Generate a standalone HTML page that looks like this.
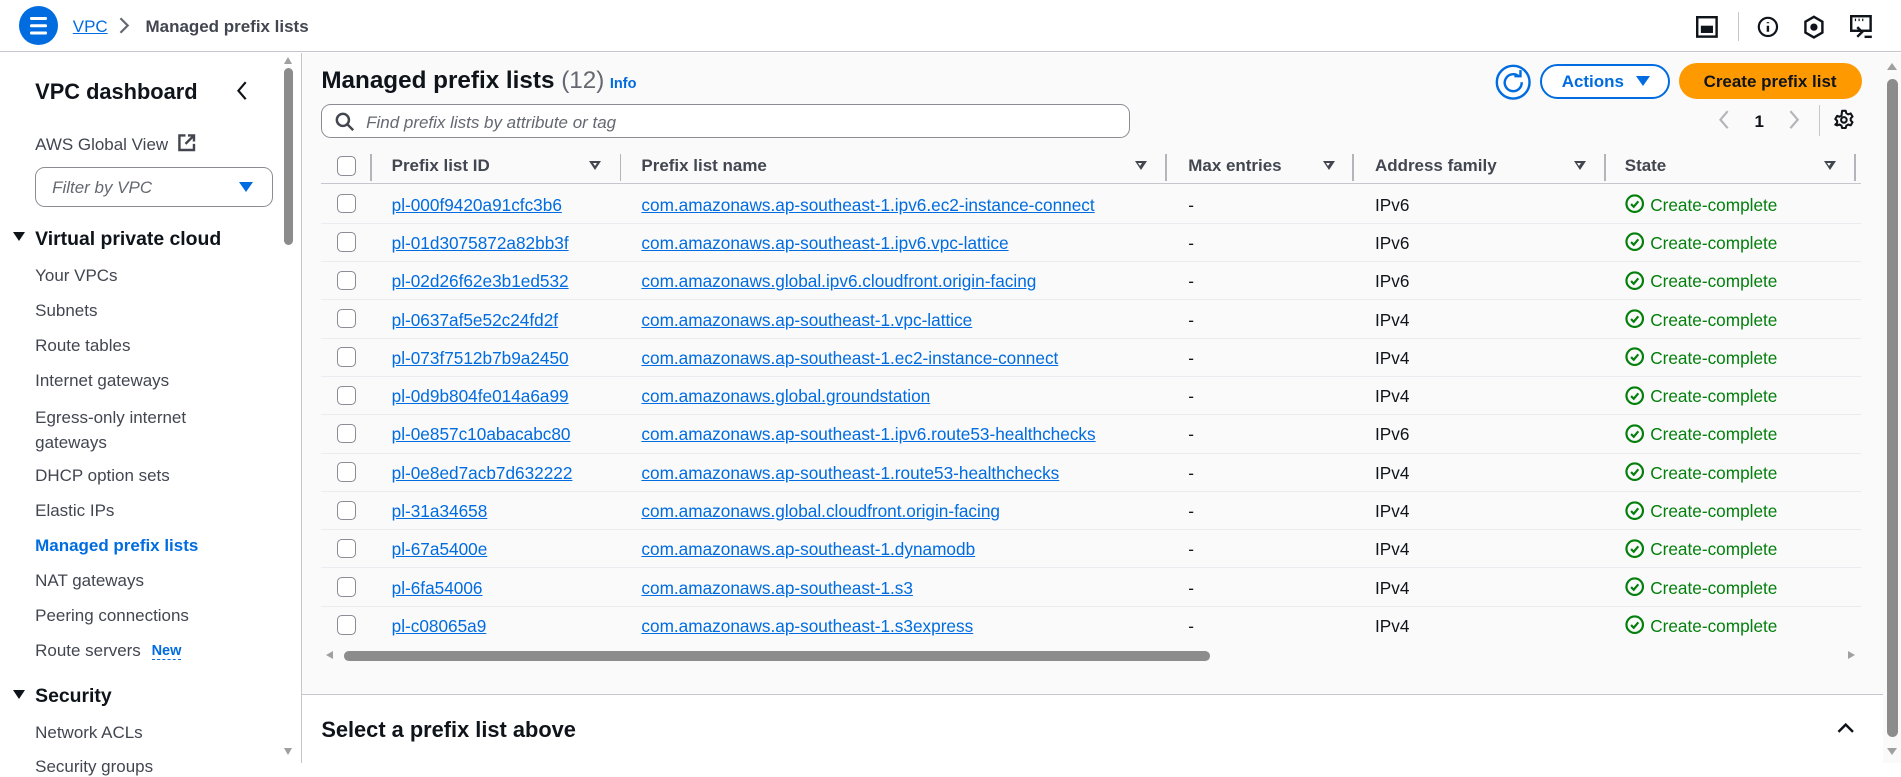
<!DOCTYPE html>
<html><head><meta charset="utf-8">
<style>
html{zoom:1.2125}
*{box-sizing:border-box;margin:0;padding:0}
body{width:1568px;height:629px;overflow:hidden;font-family:"Liberation Sans",sans-serif;color:#0f141a;background:#fff;position:relative;font-size:14px}
.a{position:absolute;white-space:nowrap}
.link{color:#006ce0;text-decoration:underline}
.nav{position:absolute;left:29px;font-size:14px;color:#424650}
.cb{position:absolute;left:278px;width:16px;height:16px;border:1.5px solid #8c8c94;border-radius:4px;background:#fff}
.row{position:absolute;left:265px;width:1270px;height:32px;border-top:1px solid #ebebf0}
.th{position:absolute;top:129px;font-weight:bold;color:#424650;font-size:14px}
.sep{position:absolute;top:127px;width:1.5px;height:22px;background:#b4b4bb}
.tri{position:absolute;top:133px;width:0;height:0;border-left:5px solid transparent;border-right:5px solid transparent;border-top:8px solid #424650}
.tri:after{content:"";position:absolute;left:-2px;top:-6px;border-left:2px solid transparent;border-right:2px solid transparent;border-top:3px solid #fff}
.ok{color:#037f0c}
.t{font-size:14.2px}
</style></head><body>
<!-- header -->
<div class="a" style="left:0;top:0;width:1568px;height:43px;border-bottom:1px solid #c6c6cd;background:#fff"></div>
<div class="a" style="left:16px;top:5px;width:32px;height:32px;border-radius:50%;background:#006ce0"></div>
<div class="a" style="left:25px;top:14px;width:14px;height:2.5px;background:#fff;box-shadow:0 6px 0 #fff,0 12px 0 #fff;border-radius:1px"></div>
<div class="a link" style="left:60px;top:14px;font-size:14px">VPC</div>
<svg class="a" style="left:97px;top:14px" width="10" height="14"><path d="M2 1l6 6-6 6" stroke="#656871" stroke-width="1.8" fill="none"/></svg>
<div class="a" style="left:120px;top:14px;font-size:14px;font-weight:bold;color:#424650">Managed prefix lists</div>
<svg class="a" style="left:1399px;top:13px" width="18" height="18"><rect x="1" y="1" width="16" height="16" fill="none" stroke="#0f141a" stroke-width="2"/><rect x="4" y="8" width="10" height="6" fill="#0f141a"/></svg>
<div class="a" style="left:1433px;top:10px;width:1px;height:24px;background:#c6c6cd"></div>
<svg class="a" style="left:1449px;top:13px" width="18" height="18"><circle cx="9" cy="9" r="7.5" fill="none" stroke="#0f141a" stroke-width="1.8"/><path d="M9 8v5M9 5v1" stroke="#0f141a" stroke-width="2"/></svg>
<svg class="a" style="left:1487px;top:12px" width="18" height="20"><path d="M9 1.5l7 4v9l-7 4-7-4v-9z" fill="none" stroke="#0f141a" stroke-width="2"/><circle cx="9" cy="10" r="3" fill="#0f141a"/></svg>
<svg class="a" style="left:1526px;top:12px" width="20" height="20"><rect x="1" y="1" width="16" height="12" fill="none" stroke="#0f141a" stroke-width="2"/><path d="M4 4h1M7 4h1M10 4h1M6 10l4 4-4 4" stroke="#0f141a" stroke-width="2" fill="none"/><path d="M12 18h6" stroke="#0f141a" stroke-width="2"/></svg>
<!-- sidebar -->
<div class="a" style="left:248px;top:44px;width:1px;height:585px;background:#c6c6cd"></div>
<div class="a" style="left:234px;top:56px;width:8px;height:146px;border-radius:4px;background:#8c8c8c"></div>
<div class="a" style="left:234px;top:47px;border-left:4px solid transparent;border-right:4px solid transparent;border-bottom:6px solid #a0a0a0"></div>
<div class="a" style="left:234px;top:617px;border-left:4px solid transparent;border-right:4px solid transparent;border-top:6px solid #a0a0a0"></div>
<div class="a" style="left:29px;top:65px;font-size:18px;font-weight:bold">VPC dashboard</div>
<svg class="a" style="left:195px;top:67px" width="10" height="16"><path d="M8 1L2 8l6 7" stroke="#0f141a" stroke-width="1.8" fill="none"/></svg>
<div class="nav" style="top:111px">AWS Global View</div>
<svg class="a" style="left:146px;top:110px" width="16" height="16"><path d="M7 2H2v12h12V9" stroke="#424650" stroke-width="2" fill="none"/><path d="M9 2h5v5M14 2L7 9" stroke="#424650" stroke-width="2" fill="none"/></svg>
<div class="a" style="left:29px;top:138px;width:196px;height:33px;border:1px solid #8c8c94;border-radius:8px"></div>
<div class="a" style="left:43px;top:147px;font-style:italic;color:#656871">Filter by VPC</div>
<div class="a" style="left:197px;top:150px;border-left:6px solid transparent;border-right:6px solid transparent;border-top:9px solid #006ce0"></div>
<div class="a" style="left:11px;top:191px;border-left:5px solid transparent;border-right:5px solid transparent;border-top:8px solid #0f141a"></div>
<div class="a" style="left:29px;top:188px;font-size:16px;font-weight:bold">Virtual private cloud</div>
<div class="nav" style="top:219px">Your VPCs</div>
<div class="nav" style="top:248px">Subnets</div>
<div class="nav" style="top:277px">Route tables</div>
<div class="nav" style="top:306px">Internet gateways</div>
<div class="nav" style="top:334px;line-height:21px">Egress-only internet<br>gateways</div>
<div class="nav" style="top:384px">DHCP option sets</div>
<div class="nav" style="top:413px">Elastic IPs</div>
<div class="nav" style="top:442px;color:#006ce0;font-weight:bold">Managed prefix lists</div>
<div class="nav" style="top:471px">NAT gateways</div>
<div class="nav" style="top:500px">Peering connections</div>
<div class="nav" style="top:529px">Route servers</div>
<div class="a" style="left:125px;top:530px;font-size:12px;font-weight:bold;color:#006ce0;border-bottom:1px dashed #006ce0">New</div>
<div class="a" style="left:11px;top:569px;border-left:5px solid transparent;border-right:5px solid transparent;border-top:8px solid #0f141a"></div>
<div class="a" style="left:29px;top:565px;font-size:16px;font-weight:bold">Security</div>
<div class="nav" style="top:596px">Network ACLs</div>
<div class="nav" style="top:624px">Security groups</div>
<!-- main -->
<div class="a" style="left:249px;top:44px;width:1304px;height:528px;background:#fafafa"></div>
<div class="a" style="left:249px;top:572px;width:1304px;height:1px;background:#c6c6cd"></div>
<div class="a" style="left:1553px;top:44px;width:15px;height:585px;background:#fafafa"></div>
<div class="a" style="left:1556px;top:65px;width:9px;height:543px;border-radius:5px;background:#8c8c8c"></div>
<div class="a" style="left:1556px;top:52px;border-left:4.5px solid transparent;border-right:4.5px solid transparent;border-bottom:6px solid #a0a0a0"></div>
<div class="a" style="left:1556px;top:617px;border-left:4.5px solid transparent;border-right:4.5px solid transparent;border-top:6px solid #a0a0a0"></div>
<div class="a" style="left:265px;top:55px;font-size:20px;font-weight:bold">Managed prefix lists <span style="font-weight:normal;color:#656871">(12)</span></div>
<div class="a" style="left:503px;top:63px;font-size:12px;font-weight:bold;color:#006ce0">Info</div>
<svg class="a" style="left:1233px;top:53px" width="30" height="30"><circle cx="15" cy="15" r="13.5" fill="#fff" stroke="#006ce0" stroke-width="2"/><path d="M20 10.5A7 7 0 1 0 22 15" stroke="#006ce0" stroke-width="2" fill="none"/><path d="M16 10h5V5" stroke="#006ce0" stroke-width="2" fill="none"/></svg>
<div class="a" style="left:1270px;top:53px;width:107px;height:29px;border:2px solid #006ce0;border-radius:15px;background:#fff"></div>
<div class="a" style="left:1288px;top:59px;font-weight:bold;color:#006ce0">Actions</div>
<div class="a" style="left:1349px;top:63px;border-left:6px solid transparent;border-right:6px solid transparent;border-top:9px solid #006ce0"></div>
<div class="a" style="left:1385px;top:52px;width:151px;height:30px;border-radius:15px;background:#ff9900"></div>
<div class="a" style="left:1405px;top:59px;font-weight:bold">Create prefix list</div>
<div class="a" style="left:265px;top:86px;width:667px;height:28px;border:1px solid #8c8c94;border-radius:8px;background:#fff"></div>
<svg class="a" style="left:276px;top:92px" width="16" height="16"><circle cx="6.5" cy="6.5" r="5" stroke="#424650" stroke-width="2" fill="none"/><path d="M10 10l5 5" stroke="#424650" stroke-width="2"/></svg>
<div class="a" style="left:302px;top:93px;font-style:italic;color:#656871">Find prefix lists by attribute or tag</div>
<svg class="a" style="left:1417px;top:91px" width="10" height="16"><path d="M8 1L2 8l6 7" stroke="#b4b4bb" stroke-width="1.8" fill="none"/></svg>
<div class="a" style="left:1447px;top:92px;font-weight:bold">1</div>
<svg class="a" style="left:1475px;top:91px" width="10" height="16"><path d="M2 1l6 7-6 7" stroke="#b4b4bb" stroke-width="1.8" fill="none"/></svg>
<div class="a" style="left:1500px;top:87px;width:1px;height:25px;background:#c6c6cd"></div>
<svg class="a" style="left:1512px;top:90px" width="18" height="18" viewBox="0 0 18 18"><path d="M7.5 1.5h3l.5 2 1.6.9 2-.7 1.5 2.6-1.5 1.4v1.8l1.5 1.4-1.5 2.6-2-.7-1.6.9-.5 2h-3l-.5-2-1.6-.9-2 .7L1.9 12.9l1.5-1.4V9.7L1.9 8.3 3.4 5.7l2 .7 1.6-.9z" fill="none" stroke="#0f141a" stroke-width="1.7" stroke-linejoin="round"/><circle cx="9" cy="9" r="2.3" fill="none" stroke="#0f141a" stroke-width="1.7"/></svg>
<!-- table header -->
<div class="cb" style="top:129px"></div>
<div class="sep" style="left:305px"></div>
<div class="th" style="left:323px">Prefix list ID</div><div class="tri" style="left:486px"></div><div class="sep" style="left:511px"></div>
<div class="th" style="left:529px">Prefix list name</div><div class="tri" style="left:936px"></div><div class="sep" style="left:961px"></div>
<div class="th" style="left:980px">Max entries</div><div class="tri" style="left:1091px"></div><div class="sep" style="left:1115px"></div>
<div class="th" style="left:1134px">Address family</div><div class="tri" style="left:1298px"></div><div class="sep" style="left:1323px"></div>
<div class="th" style="left:1340px">State</div><div class="tri" style="left:1504px"></div><div class="sep" style="left:1529px"></div>
<div class="a" style="left:265px;top:151px;width:1270px;height:1px;background:#c6c6cd"></div>
<div id="rows"></div>
<script>
var d=[["pl-000f9420a91cfc3b6","com.amazonaws.ap-southeast-1.ipv6.ec2-instance-connect","IPv6"],
["pl-01d3075872a82bb3f","com.amazonaws.ap-southeast-1.ipv6.vpc-lattice","IPv6"],
["pl-02d26f62e3b1ed532","com.amazonaws.global.ipv6.cloudfront.origin-facing","IPv6"],
["pl-0637af5e52c24fd2f","com.amazonaws.ap-southeast-1.vpc-lattice","IPv4"],
["pl-073f7512b7b9a2450","com.amazonaws.ap-southeast-1.ec2-instance-connect","IPv4"],
["pl-0d9b804fe014a6a99","com.amazonaws.global.groundstation","IPv4"],
["pl-0e857c10abacabc80","com.amazonaws.ap-southeast-1.ipv6.route53-healthchecks","IPv6"],
["pl-0e8ed7acb7d632222","com.amazonaws.ap-southeast-1.route53-healthchecks","IPv4"],
["pl-31a34658","com.amazonaws.global.cloudfront.origin-facing","IPv4"],
["pl-67a5400e","com.amazonaws.ap-southeast-1.dynamodb","IPv4"],
["pl-6fa54006","com.amazonaws.ap-southeast-1.s3","IPv4"],
["pl-c08065a9","com.amazonaws.ap-southeast-1.s3express","IPv4"]];
var h="";
for(var i=0;i<d.length;i++){var c=168+i*31.6;var t=c-7.5;
if(i>0)h+='<div class="row" style="top:'+(c-16)+'px"></div>';
h+='<div class="cb" style="top:'+(c-8)+'px"></div>';
h+='<div class="a link t" style="left:323px;top:'+t+'px">'+d[i][0]+'</div>';
h+='<div class="a link t" style="left:529px;top:'+t+'px">'+d[i][1]+'</div>';
h+='<div class="a t" style="left:980px;top:'+t+'px">-</div>';
h+='<div class="a t" style="left:1134px;top:'+t+'px">'+d[i][2]+'</div>';
h+='<svg class="a" style="left:1340px;top:'+(c-8)+'px" width="16" height="16"><circle cx="8" cy="8" r="6.8" fill="none" stroke="#037f0c" stroke-width="1.8"/><path d="M5 8.3l2.2 2.2L11 6" stroke="#037f0c" stroke-width="1.8" fill="none"/></svg>';
h+='<div class="a ok t" style="left:1361px;top:'+t+'px">Create-complete</div>';}
document.getElementById("rows").innerHTML=h;
</script>
<!-- h scroll -->
<div class="a" style="left:284px;top:537px;width:714px;height:8px;border-radius:4px;background:#8c8c8c"></div>
<div class="a" style="left:269px;top:537px;border-top:4px solid transparent;border-bottom:4px solid transparent;border-right:6px solid #a0a0a0"></div>
<div class="a" style="left:1524px;top:537px;border-top:4px solid transparent;border-bottom:4px solid transparent;border-left:6px solid #a0a0a0"></div>
<div class="a" style="left:265px;top:591px;font-size:18px;font-weight:bold">Select a prefix list above</div>
<svg class="a" style="left:1514px;top:595px" width="16" height="12"><path d="M2 9l6-6 6 6" stroke="#0f141a" stroke-width="2" fill="none"/></svg>
</body></html>
